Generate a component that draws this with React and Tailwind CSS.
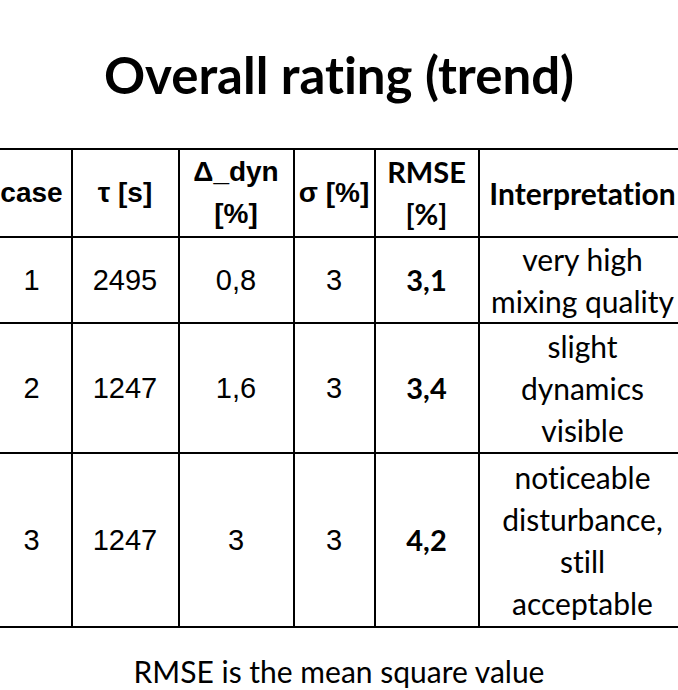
import React from 'react';

const arial = "font-['Liberation_Sans',Arial,sans-serif]";
const human = "font-['Lato','Noto_Sans',sans-serif] [font-variant-ligatures:none]";

const rows = [
  { c: '1', tau: '2495', dyn: '0,8', sigma: '3', rmse: '3,1', text: ['very high', 'mixing quality'], h: 'h-[85px]' },
  { c: '2', tau: '1247', dyn: '1,6', sigma: '3', rmse: '3,4', text: ['slight', 'dynamics', 'visible'], h: 'h-[130px]' },
  { c: '3', tau: '1247', dyn: '3', sigma: '3', rmse: '4,2', text: ['noticeable', 'disturbance,', 'still', 'acceptable'], h: 'h-[174px]' },
];

export default function App() {
  const cell = 'border-2 border-black text-center align-middle p-0';
  return (
    <div className="w-[678px] h-[690px] overflow-hidden bg-white text-black">
      {/* Title */}
      <div className="h-[148px] flex items-center justify-center">
        <h1 className={`${human} text-[51px] font-bold leading-none`}>Overall rating (trend)</h1>
      </div>

      {/* Table */}
      <div className="flex justify-center">
        <table className="table-fixed border-collapse shrink-0 w-[695px] text-[28px] leading-[42px]">
          <colgroup>
            <col className="w-[80px]" />
            <col className="w-[107px]" />
            <col className="w-[115px]" />
            <col className="w-[81px]" />
            <col className="w-[104px]" />
            <col className="w-[208px]" />
          </colgroup>
          <thead>
            <tr className="h-[88px]">
              <th className={`${cell} ${arial} font-bold`}>case</th>
              <th className={`${cell} ${arial} font-bold`}>τ [s]</th>
              <th className={`${cell} ${arial} font-bold`}>Δ_dyn<br />[%]</th>
              <th className={`${cell} ${arial} font-bold`}>σ [%]</th>
              <th className={`${cell} ${human} font-bold text-[29px]`}>RMSE<br />[%]</th>
              <th className={`${cell} ${human} font-bold text-[30px]`}>Interpretation</th>
            </tr>
          </thead>
          <tbody>
            {rows.map((r) => (
              <tr key={r.c} className={r.h}>
                <td className={`${cell} ${arial} text-[29px]`}>{r.c}</td>
                <td className={`${cell} ${arial} text-[29px]`}>{r.tau}</td>
                <td className={`${cell} ${arial} text-[29px]`}>{r.dyn}</td>
                <td className={`${cell} ${arial} text-[29px]`}>{r.sigma}</td>
                <td className={`${cell} ${human} font-bold text-[29px]`}>{r.rmse}</td>
                <td className={`${cell} ${human} text-[30px]`}>
                  {r.text.map((t) => (
                    <div key={t}>{t}</div>
                  ))}
                </td>
              </tr>
            ))}
          </tbody>
        </table>
      </div>

      {/* Footnote */}
      <p className={`${human} text-[30px] leading-[43px] text-center mt-[22px]`}>RMSE is the mean square value</p>
    </div>
  );
}
